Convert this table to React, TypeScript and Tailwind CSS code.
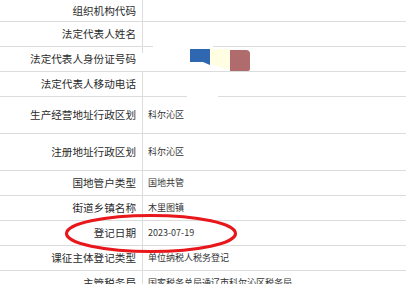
const rows: { label: string; value?: string; tall?: boolean; first?: boolean }[] = [
  { label: "组织机构代码", first: true },
  { label: "法定代表人姓名" },
  { label: "法定代表人身份证号码" },
  { label: "法定代表人移动电话" },
  { label: "生产经营地址行政区划", value: "科尔沁区", tall: true },
  { label: "注册地址行政区划", value: "科尔沁区", tall: true },
  { label: "国地管户类型", value: "国地共管" },
  { label: "街道乡镇名称", value: "木里图镇" },
  { label: "登记日期", value: "2023-07-19" },
  { label: "课征主体登记类型", value: "单位纳税人税务登记" },
  { label: "主管税务局", value: "国家税务总局通辽市科尔沁区税务局" },
];

function Row({ label, value, tall, first }: (typeof rows)[number]) {
  const h = first ? "h-[22px]" : tall ? "h-[37px]" : "h-[25px]";
  return (
    <div className={`flex ${h} shrink-0 border-b border-[#dcdcdc]`}>
      <div className="flex w-[143px] shrink-0 items-center justify-end border-r border-[#dcdcdc] pr-[6px] text-[10.6px] text-[#2b2b2b]">
        {label}
      </div>
      <div className="flex flex-1 items-center whitespace-nowrap pl-[5px] text-[9px] text-[#333]">
        {value}
      </div>
    </div>
  );
}

export default function App() {
  return (
    <div
      className="relative h-[284px] w-[406px] overflow-hidden bg-white"
      style={{ fontFamily: '"Noto Sans CJK SC", "Noto Sans", sans-serif' }}
    >
      <div className="flex flex-col">
        {rows.map(r => (
          <Row key={r.label} {...r} />
        ))}
      </div>

      {/* redaction smudge */}
      <svg className="absolute left-0 top-0" width="406" height="284" viewBox="0 0 406 284">
        <rect x="153" y="44" width="60" height="4" fill="#fff" />
        <rect x="141" y="53" width="4" height="18" fill="#fff" />
        <rect x="187" y="94" width="31" height="4" fill="#fff" />
        <polygon points="190,49 210,49 210,65 203,62 190,62" fill="#2f68b1" />
        <polygon points="210,49 230,49 230,70 210,64" fill="#fffde2" />
        <path d="M230 50 H246 Q250 50 250 54 V69 Q250 71 247 71 H230 Z" fill="#b06c6d" />
      </svg>

      {/* red circle around the date */}
      <svg className="absolute left-0 top-0" width="406" height="284" viewBox="0 0 406 284">
        <ellipse cx="151" cy="233.5" rx="84.5" ry="18" fill="none" stroke="#e8171b" strokeWidth="3.2" />
      </svg>
    </div>
  );
}
